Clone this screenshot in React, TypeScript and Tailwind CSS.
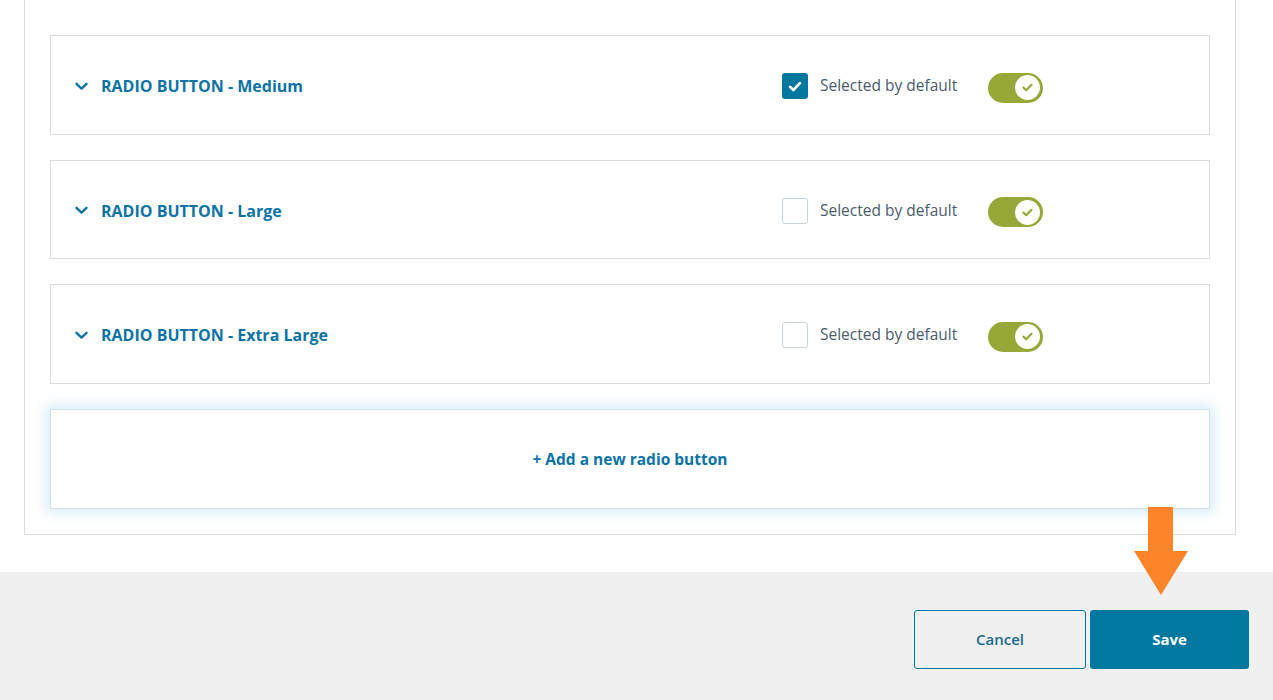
import React from "react";

const BLUE = "#0d73a5";

function Chevron() {
  return (
    <svg width="13" height="9" viewBox="0 0 13 9" className="shrink-0">
      <path d="M1.5 1.8 L6.5 6.6 L11.5 1.8" fill="none" stroke={BLUE} strokeWidth="2.4" strokeLinecap="round" strokeLinejoin="round" />
    </svg>
  );
}

function Checkbox({ checked }: { checked: boolean }) {
  return checked ? (
    <div className="w-[26px] h-[26px] rounded-[3px] bg-[#00779e] flex items-center justify-center">
      <svg width="14" height="11" viewBox="0 0 14 11">
        <path d="M2 5.8 L5.4 9 L12 2.2" fill="none" stroke="#fff" strokeWidth="2.6" strokeLinecap="round" strokeLinejoin="round" />
      </svg>
    </div>
  ) : (
    <div className="w-[26px] h-[26px] rounded-[3px] border border-[#c8d3dc] bg-white" />
  );
}

function Toggle() {
  return (
    <div className="w-[55px] h-[30px] mt-[3px] rounded-full bg-[#97a838] flex items-center justify-end pr-[3px]">
      <div className="w-[25px] h-[25px] rounded-full bg-white flex items-center justify-center">
        <svg width="11" height="9" viewBox="0 0 11 9">
          <path d="M1.5 4.6 L4.2 7.2 L9.5 1.8" fill="none" stroke="#97a838" strokeWidth="2.2" strokeLinecap="round" strokeLinejoin="round" />
        </svg>
      </div>
    </div>
  );
}

function Row({ title, checked, h }: { title: string; checked: boolean; h: string }) {
  return (
    <div className={`${h} border border-[#dcdcdc] bg-white flex items-center pl-[24px] pt-[2px]`}>
      <Chevron />
      <div className="ml-[13px] text-[16px] font-bold" style={{ color: BLUE }}>{title}</div>
      <div className="ml-auto flex items-center mr-[166px]">
        <Checkbox checked={checked} />
        <span className="ml-[12px] text-[15.5px] text-[#4b5b6b] w-[168px]">Selected by default</span>
        <Toggle />
      </div>
    </div>
  );
}

export default function App() {
  return (
    <div className="relative w-[1273px] h-[700px] bg-white overflow-hidden" style={{ fontFamily: '"Open Sans", "Noto Sans", sans-serif' }}>
      <div className="mx-[24px] w-[1212px] border-x border-b border-[#dcdcdc] px-[25px] pt-[35px] pb-[25px] flex flex-col gap-[25px]">
        <Row title="RADIO BUTTON - Medium" checked={true} h="h-[100px]" />
        <Row title="RADIO BUTTON - Large" checked={false} h="h-[99px]" />
        <Row title="RADIO BUTTON - Extra Large" checked={false} h="h-[100px]" />
        <div className="h-[100px] border border-[#cfe0ea] bg-white flex items-center justify-center pt-[1px] shadow-[0_0_12px_4px_rgba(170,215,240,0.45)]">
          <span className="text-[15.5px] font-bold" style={{ color: BLUE }}>+ Add a new radio button</span>
        </div>
      </div>
      <div className="mt-[37px] h-[128px] bg-[#f0f0f0] flex justify-end items-start pt-[38px] pr-[24px] gap-[4px]">
        <button className="w-[172px] h-[59px] rounded-[3px] border border-[#00779e] bg-transparent text-[15px] font-semibold text-[#1a6a8f]">Cancel</button>
        <button className="w-[159px] h-[59px] rounded-[3px] bg-[#00789f] text-[15px] font-bold text-white">Save</button>
      </div>
      <svg className="absolute left-[1134px] top-[507px]" width="54" height="89" viewBox="0 0 54 89">
        <rect x="14" y="0" width="25" height="45" fill="#fe842a" />
        <polygon points="0,44 54,44 27,88" fill="#fe842a" />
      </svg>
    </div>
  );
}
